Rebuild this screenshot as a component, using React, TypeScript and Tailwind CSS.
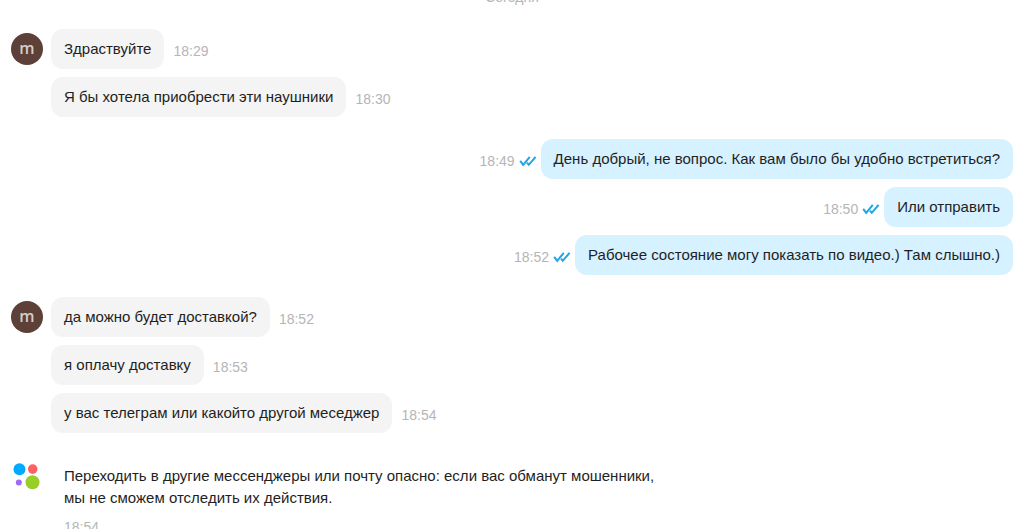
import clsx from "clsx";

interface Message {
  id: number;
  text: string;
  time: string;
}

interface MessageGroup {
  id: number;
  author: "buyer" | "me";
  messages: Message[];
}

const GROUPS: MessageGroup[] = [
  {
    id: 1,
    author: "buyer",
    messages: [
      { id: 1, text: "Здраствуйте", time: "18:29" },
      { id: 2, text: "Я бы хотела приобрести эти наушники", time: "18:30" },
    ],
  },
  {
    id: 2,
    author: "me",
    messages: [
      { id: 3, text: "День добрый, не вопрос. Как вам было бы удобно встретиться?", time: "18:49" },
      { id: 4, text: "Или отправить", time: "18:50" },
      { id: 5, text: "Рабочее состояние могу показать по видео.) Там слышно.)", time: "18:52" },
    ],
  },
  {
    id: 3,
    author: "buyer",
    messages: [
      { id: 6, text: "да можно будет доставкой?", time: "18:52" },
      { id: 7, text: "я оплачу доставку", time: "18:53" },
      { id: 8, text: "у вас телеграм или какойто другой меседжер", time: "18:54" },
    ],
  },
];

function Avatar() {
  return (
    <div className="mt-1 flex size-8 shrink-0 items-center justify-center rounded-full bg-[#5d4037] pb-0.5 font-['Open_Sans',sans-serif] text-base font-semibold leading-none text-[#d7ccc8]">
      m
    </div>
  );
}

function SystemLogo() {
  return (
    <svg viewBox="0 0 32 32" className="size-8 shrink-0" aria-hidden="true">
      <circle cx="8.5" cy="8.3" r="6" fill="#00aaff" />
      <circle cx="21.7" cy="8.1" r="4.8" fill="#ff6163" />
      <circle cx="7.8" cy="21.6" r="3" fill="#a169f7" />
      <circle cx="21.5" cy="21.2" r="7" fill="#97cf26" />
    </svg>
  );
}

function ReadTicks() {
  return (
    <svg viewBox="0 0 18 12" className="h-3 w-[18px]" fill="none" stroke="#1fa5e6" strokeWidth="2" role="img" aria-label="Прочитано">
      <path d="M1.2 5.8 4.2 9.8 10.8 1.8" />
      <path d="M8 7.6 9.8 9.8 16.6 1.8" />
    </svg>
  );
}

function MessageRow({ message, own }: { message: Message; own: boolean }) {
  return (
    <li className={clsx("flex items-center", own ? "flex-row-reverse gap-1" : "gap-[9px]")}>
      <p className={clsx("rounded-xl px-[13px] py-[9px] text-[15px] leading-[22px]", own ? "bg-[#d6f1ff]" : "bg-[#f4f4f4]")}>
        {message.text}
      </p>
      <div className="flex items-center gap-1 pt-[3px] text-sm text-[#b5b5b5]">
        <time>{message.time}</time>
        {own && <ReadTicks />}
      </div>
    </li>
  );
}

export default function App() {
  return (
    <main className="h-screen overflow-hidden bg-white px-[11px] font-['Liberation_Sans',Arial,sans-serif] text-[#1f1f1f]">
      <h2 className="-mt-3 mb-[23px] text-center text-sm leading-[18px] text-[#b5b5b5]">Сегодня</h2>

      <div className="flex flex-col gap-[22px]">
        {GROUPS.map((group) => (
          <section key={group.id} className="flex gap-2">
            {group.author === "buyer" && <Avatar />}
            <ul className="flex flex-1 flex-col gap-2">
              {group.messages.map((m) => (
                <MessageRow key={m.id} message={m} own={group.author === "me"} />
              ))}
            </ul>
          </section>
        ))}

        <section className="flex gap-2 pt-1.5">
          <SystemLogo />
          <div className="px-[13px] pt-1">
            <p className="text-[15px] leading-[22px]">
              Переходить в другие мессенджеры или почту опасно: если вас обманут мошенники,
              <br />
              мы не сможем отследить их действия.
            </p>
            <time className="mt-2 block text-sm text-[#b5b5b5]">18:54</time>
          </div>
        </section>
      </div>
    </main>
  );
}
